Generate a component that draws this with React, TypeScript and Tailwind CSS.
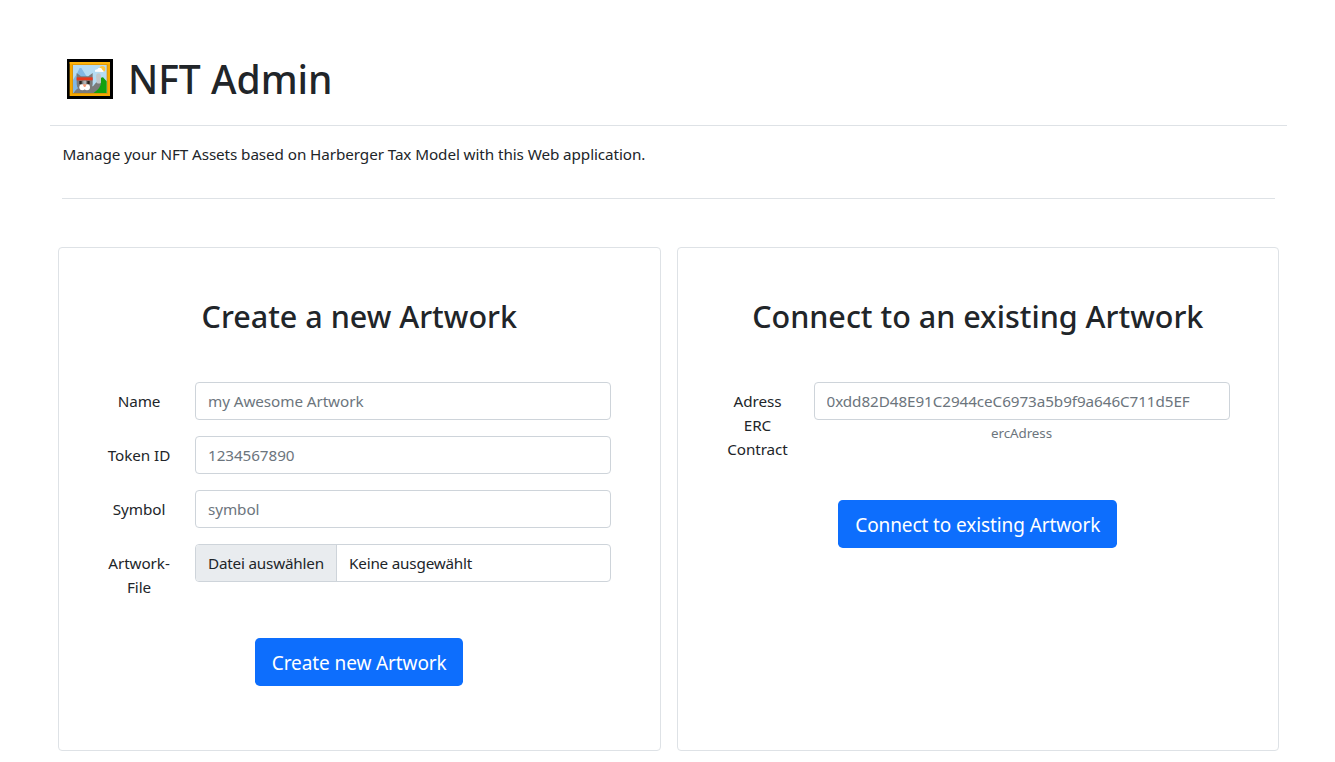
import type { ReactNode } from 'react';

function FramedCat() {
  return (
    <svg className="h-10 w-[46px] shrink-0" viewBox="0 0 138 120" aria-hidden="true">
      <rect width="138" height="120" fill="#000" />
      <rect x="8" y="9" width="121" height="102" fill="#f5a800" />
      <path d="M8 9h121v5H8z" fill="#ffb80f" />
      <rect x="15" y="16" width="107" height="89" fill="#d9960c" />
      <rect x="18" y="18" width="101" height="84" fill="#b5dcf3" />
      <path d="M18 62 28 47 38 27h5L56 48 70 62v40H18z" fill="#82b8e4" />
      <circle cx="106" cy="30" r="9" fill="#ffc83d" />
      <path d="M84 38q-1-7 7-7 3-7 10-4 5 2 5 6 5 1 4 6z" fill="#fff" />
      <path d="M74 102 102 57q5-5 10 2l7 8v35z" fill="#13a10e" />
      <path d="M20 102q8-14 24-20h34l10-12 14 2q0 14-22 30z" fill="#7b7b7b" />
      <path d="M29 42 42 52h22l13-10v33q0 19-24 19-24 0-24-19z" fill="#7b7b7b" />
      <path d="M87 50q1-7 8-7 7 1 7 8v20q-7 5-13 0z" fill="#c3c8cb" />
      <rect x="29" y="55" width="48" height="9" fill="#e8391d" />
      <rect x="37" y="66" width="7" height="9" fill="#28221f" />
      <rect x="61" y="66" width="7" height="9" fill="#28221f" />
      <path d="M49 65h8v12h-8z" fill="#aeb1b4" />
      <ellipse cx="46" cy="85" rx="9" ry="9" fill="#fff" />
      <ellipse cx="60" cy="85" rx="9" ry="9" fill="#fff" />
      <path d="M47 76h12l-4 8h-4z" fill="#f59b78" />
    </svg>
  );
}

function Card({ title, children }: { title: string; children: ReactNode }) {
  return (
    <section className="flex flex-col items-center rounded border border-[#dee2e6] p-12 text-center">
      <h2 className="pt-0.5 text-[30.5px] leading-9 font-medium whitespace-nowrap">{title}</h2>
      {children}
    </section>
  );
}

function Row({ label, children }: { label: ReactNode; children: ReactNode }) {
  return (
    <div className="flex w-full gap-6">
      <div className="w-16 shrink-0 pt-[7px] leading-6 whitespace-nowrap">{label}</div>
      <div className="min-w-0 flex-1">{children}</div>
    </div>
  );
}

const inputClass =
  'block h-[38px] w-full rounded border border-[#ced4da] bg-white px-3 text-[15.25px] text-[#212529] placeholder:text-[#6c757d] outline-none';

const buttonClass =
  'mt-[39px] h-12 rounded-[4.8px] bg-[#0d6efd] pt-0.5 text-[19px] leading-[30px] tracking-[-0.1px] whitespace-nowrap text-white';

const formClass = 'mt-12 flex w-[504px] flex-col gap-4 self-start tracking-[-0.08px]';

export default function App() {
  return (
    <div className="h-[762px] overflow-hidden bg-white pr-12 pl-[50px] font-['Noto_Sans',sans-serif] text-[15.25px] text-[#212529]">
      <header className="flex h-[126px] items-start gap-[15px] border-b border-[#dee2e6] pt-[59px] pl-[17px]">
        <FramedCat />
        <h1 className="-mt-1 text-[39px] leading-[48px] font-medium whitespace-nowrap">NFT Admin</h1>
      </header>
      <div className="mx-3 h-[73px] border-b border-[#dee2e6] pt-4">
        <p className="pl-[0.5px] leading-6 tracking-[-0.09px] whitespace-nowrap">
          Manage your NFT Assets based on Harberger Tax Model with this Web application.
        </p>
      </div>
      <main className="mx-2 mt-12 grid h-[504px] grid-cols-2 gap-4">
        <Card title="Create a new Artwork">
          <form className={formClass}>
            <Row label="Name">
              <input className={inputClass} placeholder="my Awesome Artwork" />
            </Row>
            <Row label="Token ID">
              <input className={inputClass} placeholder="1234567890" />
            </Row>
            <Row label="Symbol">
              <input className={inputClass} placeholder="symbol" />
            </Row>
            <Row label={<>Artwork-<br />File</>}>
              <div className="flex h-[38px] overflow-hidden rounded border border-[#ced4da] text-left leading-9 tracking-[-0.2px] whitespace-nowrap">
                <span className="w-[141px] shrink-0 border-r border-[#ced4da] bg-[#e9ecef] pl-3">Datei auswählen</span>
                <span className="pl-3">Keine ausgewählt</span>
              </div>
            </Row>
          </form>
          <button className={`${buttonClass} w-52`}>Create new Artwork</button>
        </Card>
        <Card title="Connect to an existing Artwork">
          <form className={formClass}>
            <Row label={<>Adress<br />ERC<br />Contract</>}>
              <input className={inputClass} placeholder="0xdd82D48E91C2944ceC6973a5b9f9a646C711d5EF" />
              <p className="mt-[3px] text-[13.4px] leading-5 text-[#6c757d]">ercAdress</p>
            </Row>
          </form>
          <button className={`${buttonClass} w-[279px]`}>Connect to existing Artwork</button>
        </Card>
      </main>
    </div>
  );
}
